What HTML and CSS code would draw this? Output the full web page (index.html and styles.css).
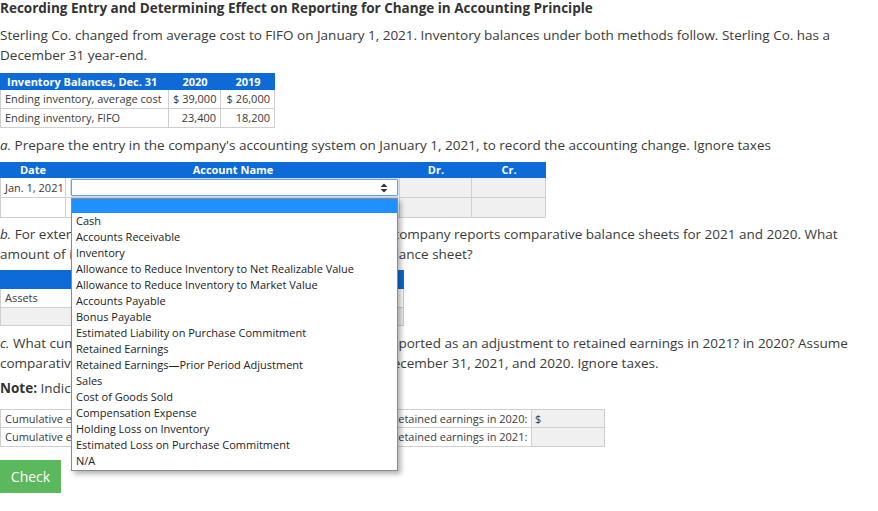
FILE: index.html
```html
<!DOCTYPE html>
<html>
<head>
<meta charset="utf-8">
<link rel="stylesheet" href="styles.css">
</head>
<body>
<h1 class="title">Recording Entry and Determining Effect on Reporting for Change in Accounting Principle</h1>
<p class="text intro">Sterling Co. changed from average cost to FIFO on January 1, 2021. Inventory balances under both methods follow. Sterling Co. has a December 31 year-end.</p>

<table class="grid inv">
  <thead>
    <tr><th class="c-label">Inventory Balances, Dec. 31</th><th class="c-num">2020</th><th class="c-num2">2019</th></tr>
  </thead>
  <tbody>
    <tr><td>Ending inventory, average cost</td><td class="num">$ 39,000</td><td class="num">$ 26,000</td></tr>
    <tr><td>Ending inventory, FIFO</td><td class="num">23,400</td><td class="num">18,200</td></tr>
  </tbody>
</table>

<p class="text part-a"><i>a.</i> Prepare the entry in the company's accounting system on January 1, 2021, to record the accounting change. Ignore taxes</p>

<table class="grid journal">
  <thead>
    <tr><th class="j-date">Date</th><th class="j-acct">Account Name</th><th class="j-dr">Dr.</th><th class="j-cr">Cr.</th></tr>
  </thead>
  <tbody>
    <tr>
      <td class="date">Jan. 1, 2021</td>
      <td class="acct">
        <div class="select-wrap">
          <div class="select">
            <svg class="arrows" width="8" height="10" viewBox="0 0 8 10"><path d="M0.5 4 L4 0.5 L7.5 4 Z M0.5 6 L4 9.5 L7.5 6 Z" fill="#333"/></svg>
          </div>
          <ul class="listbox">
            <li class="opt selected"></li>
            <li class="opt">Cash</li>
            <li class="opt">Accounts Receivable</li>
            <li class="opt">Inventory</li>
            <li class="opt">Allowance to Reduce Inventory to Net Realizable Value</li>
            <li class="opt">Allowance to Reduce Inventory to Market Value</li>
            <li class="opt">Accounts Payable</li>
            <li class="opt">Bonus Payable</li>
            <li class="opt">Estimated Liability on Purchase Commitment</li>
            <li class="opt">Retained Earnings</li>
            <li class="opt">Retained Earnings—Prior Period Adjustment</li>
            <li class="opt">Sales</li>
            <li class="opt">Cost of Goods Sold</li>
            <li class="opt">Compensation Expense</li>
            <li class="opt">Holding Loss on Inventory</li>
            <li class="opt">Estimated Loss on Purchase Commitment</li>
            <li class="opt">N/A</li>
          </ul>
        </div>
      </td>
      <td class="input"></td>
      <td class="input"></td>
    </tr>
    <tr>
      <td class="date"></td>
      <td class="acct"></td>
      <td class="input"></td>
      <td class="input"></td>
    </tr>
  </tbody>
</table>

<p class="text part-b"><i>b.</i> For external reporting purposes in 2021, we assume that its company reports comparative balance sheets for 2021 and 2020. What amount of inventory was reported on the 2020 comparative balance sheet?</p>

<table class="grid bal">
  <thead>
    <tr><th colspan="2">Balance Sheet, December 31, 2020</th></tr>
  </thead>
  <tbody>
    <tr><td class="b-label">Assets</td><td class="b-val"></td></tr>
    <tr><td class="b-label input"></td><td class="b-val input"></td></tr>
  </tbody>
</table>

<p class="text part-c"><i>c.</i> What cumulative effect of change in accounting principle is reported as an adjustment to retained earnings in 2021? in 2020? Assume comparative financial statements are issued for years ended December 31, 2021, and 2020. Ignore taxes.</p>

<p class="text note"><b>Note:</b> Indicate a negative amount with a minus sign.</p>

<table class="grid cum">
  <tbody>
    <tr><td class="k-label">Cumulative effect of the change in accounting principle as an adjustment to retained earnings in 2020:</td><td class="k-val input">$</td></tr>
    <tr><td class="k-label">Cumulative effect of the change in accounting principle as an adjustment to retained earnings in 2021:</td><td class="k-val input"></td></tr>
  </tbody>
</table>

<button class="check" type="button">Check</button>
</body>
</html>
```

FILE: styles.css
```css
* { box-sizing: border-box; }

body {
  margin: 0;
  width: 872px;
  font-family: "Open Sans", "DejaVu Sans", sans-serif;
  font-size: 13.5px;
  line-height: 20px;
  color: #3a3a3a;
  background: #fff;
}

.title {
  margin: 0;
  font-size: 13.5px;
  line-height: 17px;
  font-weight: 700;
  color: #333;
}

.text { margin: 0; }
.intro { margin-top: 8px; }
.part-a { margin-top: 7px; }
.part-b { margin-top: 6px; }
.part-c { margin-top: 7px; }
.note { margin-top: 5px; }
.note b { font-weight: 700; color: #333; }

/* generic grid tables */
.grid {
  border-collapse: separate;
  border-spacing: 0;
  font-size: 11px;
  line-height: 14px;
  color: #3a3a3a;
  table-layout: fixed;
}
.grid th {
  background: #0d6ad6;
  color: #fff;
  font-weight: 700;
  padding: 0;
}
.grid td {
  padding: 0 4px;
  border-right: 1px solid #cfcfcf;
  border-bottom: 1px solid #cfcfcf;
  white-space: nowrap;
  overflow: visible;
}
.grid tbody tr td:first-child { border-left: 1px solid #cfcfcf; }
.grid td.input { background: #f0f0f0; }

/* inventory balances */
.inv { margin-top: 8px; width: 275px; }
.inv th { height: 17px; line-height: 17px; }
.inv .c-label { width: 169px; text-align: left; padding-left: 7px; }
.inv .c-num { width: 52px; text-align: center; }
.inv .c-num2 { width: 54px; text-align: center; }
.inv td { height: 19px; }
.inv td.num { text-align: right; padding-right: 4px; }

/* journal */
.journal { margin-top: 7px; width: 546px; }
.journal th { height: 16px; line-height: 16px; text-align: center; }
.journal .j-date { width: 66px; }
.journal .j-acct { width: 334px; }
.journal .j-dr { width: 72px; }
.journal .j-cr { width: 74px; }
.journal td { height: 20px; }
.journal td.date { background: #fff; padding: 0 4px; }
.journal td.acct { padding: 0 2px 0 5px; vertical-align: middle; }

.select-wrap { position: relative; width: 327px; }
.select {
  height: 17px;
  border: 1px solid #6f9fe3;
  border-radius: 1px;
  background: #fff;
  box-shadow: 0 0 0 1px rgba(120, 165, 235, 0.35);
  display: flex;
  align-items: center;
  justify-content: flex-end;
  padding-right: 9px;
}
.arrows { display: block; }

.listbox {
  position: absolute;
  z-index: 10;
  left: 0;
  top: 19px;
  width: 327px;
  margin: 0;
  padding: 0 0 1px;
  list-style: none;
  background: #fff;
  border: 1px solid #8a8a8a;
  box-shadow: 3px 3px 5px rgba(0, 0, 0, 0.3);
  font-size: 11px;
  color: #222;
}
.opt {
  height: 16px;
  line-height: 16px;
  padding-left: 4px;
  white-space: nowrap;
}
.opt.selected {
  height: 14px;
  background: #1e90ff;
}

/* balance sheet (part b) */
.bal { margin-top: 6px; width: 404px; }
.bal th { height: 19px; line-height: 19px; text-align: center; }
.bal .b-label { width: 230px; }
.bal td { height: 19px; }
.bal tr:last-child td { height: 18px; }

/* cumulative effect (part c) */
.cum { margin-top: 11px; width: 605px; }
.cum tbody tr:first-child td { border-top: 1px solid #cfcfcf; }
.cum td { height: 19px; }
.cum .k-label { width: 532px; overflow: hidden; }
.cum .k-val { width: 73px; padding-left: 3px; }

.check {
  display: block;
  margin-top: 13px;
  width: 61px;
  height: 33px;
  border: none;
  border-radius: 0;
  background: #5cb85c;
  color: #fff;
  font-family: "Open Sans", "DejaVu Sans", sans-serif;
  font-size: 14px;
  padding: 0;
}
```
